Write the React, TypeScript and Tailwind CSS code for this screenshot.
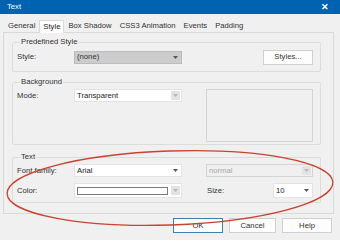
import React from 'react';

// small down-pointing arrow used in the combo boxes
function Caret({ className = '' }: { className?: string }) {
    return (
        <svg width="5" height="3" viewBox="0 0 5 3" className={className}>
            <path d="M0 0 L5 0 L2.5 3 Z" fill="currentColor" />
        </svg>
    );
}

interface ComboProps {
    value?: string;
    width: string;
    variant?: 'gray' | 'white' | 'disabled' | 'whiteBtn';
    height?: string;
    children?: React.ReactNode;
}

// windows-style drop down box
function Combo({ value, width, variant = 'white', height = 'h-[13px]', children }: ComboProps) {
    const box =
        variant === 'gray'
            ? 'bg-[#cccccc] border-[#bcbcbc] text-[#333]'
            : variant === 'disabled'
              ? 'bg-[#f0f0f0] border-[#d4d4d4] text-[#a8a8a8]'
              : 'bg-white border-[#e3e3e3] text-[#222]';

    return (
        <div className={`${width} ${height} ${box} border flex items-center justify-between pl-[2px] pr-[1px]`}>
            {children ?? <span className="leading-none">{value}</span>}
            {variant === 'disabled' || variant === 'whiteBtn' ? (
                <div className="w-[9px] h-[9px] bg-[#e3e3e3] flex items-center justify-center text-[#b8b8b8]">
                    <Caret />
                </div>
            ) : (
                <div className="w-[9px] flex items-center justify-center text-[#555]">
                    <Caret />
                </div>
            )}
        </div>
    );
}

// group box with its caption sitting on the top border
function Group({ title, className = '', children }: { title: string; className?: string; children: React.ReactNode }) {
    return (
        <fieldset className={`border border-[#dcdcdc] rounded-[2px] ${className}`}>
            <legend className="ml-[3px] px-[1px] leading-[8px] text-[#333]">{title}</legend>
            {children}
        </fieldset>
    );
}

function Button({ label, width, primary = false }: { label: string; width: string; primary?: boolean }) {
    return (
        <div
            className={`${width} h-[15px] bg-[#fdfdfd] border flex items-center justify-center text-[#333] ${
                primary ? 'border-[#3c7fb1]' : 'border-[#d0d0d0]'
            }`}
        >
            {label}
        </div>
    );
}

export default function App() {
    const tabs = ['General', 'Style', 'Box Shadow', 'CSS3 Animation', 'Events', 'Padding'];

    return (
        <div
            className="relative w-[340px] h-[243px] bg-white overflow-hidden text-[7.7px]"
            style={{ fontFamily: '"Liberation Sans", Arial, sans-serif' }}
        >
            <div className="h-[240px] bg-[#f0f0f0] flex flex-col">
                {/* title bar */}
                <div className="h-[14px] bg-[#0063b1] flex items-center justify-between pl-[7px] pr-[11px] text-white">
                    <span className="leading-none">Text</span>
                    <span className="text-[9px] font-bold leading-none">✕</span>
                </div>

                {/* tabs */}
                <div className="h-[18px] flex items-end pl-[4px]">
                    {tabs.map((tab) =>
                        tab === 'Style' ? (
                            <div
                                key={tab}
                                className="h-[13px] px-[3px] bg-white border border-b-0 border-[#d9d9d9] flex items-center text-[#222] -mb-px relative z-10"
                            >
                                {tab}
                            </div>
                        ) : (
                            <div key={tab} className="h-[12px] px-[4px] flex items-center text-[#333]">
                                {tab}
                            </div>
                        )
                    )}
                </div>

                {/* tab panel */}
                <div className="ml-[3px] w-[331px] h-[182px] border border-[#d9d9d9] bg-[#f0f0f0] px-[8px] pt-[5px]">
                    <Group title="Predefined Style" className="w-[309px] h-[34px] pl-[4px] pr-[7px]">
                        <div className="flex items-center h-[18px] mt-[2px]">
                            <span className="w-[57px] text-[#333]">Style:</span>
                            <Combo value="(none)" width="w-[108px]" variant="gray" />
                            <div className="ml-auto">
                                <Button label="Styles..." width="w-[50px]" />
                            </div>
                        </div>
                    </Group>

                    <Group title="Background" className="w-[309px] h-[67px] mt-[6px] pl-[4px] pr-[7px]">
                        <div className="flex items-start pt-[3px]">
                            <span className="w-[57px] text-[#333] leading-[13px]">Mode:</span>
                            <Combo value="Transparent" width="w-[108px]" variant="whiteBtn" />
                            <div className="ml-auto w-[107px] h-[53px] border border-[#d4d4d4]" />
                        </div>
                    </Group>

                    <Group title="Text" className="w-[309px] h-[50px] mt-[8px] pl-[4px] pr-[7px]">
                        <div className="flex items-center pt-[3px]">
                            <span className="w-[57px] text-[#333]">Font family:</span>
                            <Combo value="Arial" width="w-[108px]" />
                            <div className="ml-auto">
                                <Combo value="normal" width="w-[107px]" variant="disabled" />
                            </div>
                        </div>
                        <div className="flex items-center mt-[6px]">
                            <span className="w-[57px] text-[#333]">Color:</span>
                            <Combo width="w-[108px]" variant="whiteBtn" height="h-[15px]">
                                <div className="w-[91px] h-[8px] border border-[#7a7a7a] bg-white" />
                            </Combo>
                            <span className="ml-[25px] text-[#333]">Size:</span>
                            <div className="ml-auto">
                                <Combo value="10" width="w-[40px]" height="h-[15px]" />
                            </div>
                        </div>
                    </Group>
                </div>

                {/* dialog buttons */}
                <div className="flex justify-end items-center pr-[8px] mt-[4px] gap-[6px]">
                    <Button label="OK" width="w-[50px]" primary />
                    <Button label="Cancel" width="w-[47px]" />
                    <Button label="Help" width="w-[50px]" />
                </div>
            </div>

            {/* red annotation ellipse drawn over the dialog */}
            <svg className="absolute inset-0 pointer-events-none" width="340" height="243" viewBox="0 0 340 243">
                <ellipse
                    cx="170"
                    cy="188"
                    rx="163"
                    ry="37"
                    transform="rotate(-2 170 188)"
                    fill="none"
                    stroke="#c8422f"
                    strokeWidth="1.3"
                />
            </svg>
        </div>
    );
}
